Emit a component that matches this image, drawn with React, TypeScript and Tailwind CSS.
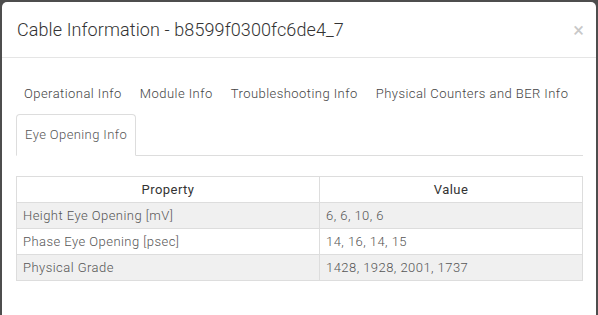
import React from "react";

const tabs1 = ["Operational Info", "Module Info", "Troubleshooting Info", "Physical Counters and BER Info"];

const rows = [
  ["Height Eye Opening [mV]", "6, 6, 10, 6"],
  ["Phase Eye Opening [psec]", "14, 16, 14, 15"],
  ["Physical Grade", "1428, 1928, 2001, 1737"],
];

export default function App() {
  return (
    <div className="w-[598px] h-[315px] bg-[#4d4d4d] pt-[2px] px-[2px] overflow-hidden" style={{ fontFamily: "Roboto, sans-serif" }}>
      <div className="bg-white rounded-t-[5px] h-[320px] text-[#333]">
        <div className="h-[56px] border-b border-[#e5e5e5] flex items-center justify-between pl-[15px] pr-[12px]">
          <span className="text-[18px] font-light text-[#333] tracking-[0.1px]">Cable Information - b8599f0300fc6de4_7</span>
          <span className="text-[20px] text-[#c8c8c8] leading-none">×</span>
        </div>
        <div className="pl-[14px] pr-[13px] pt-[15px]">
          <div className="flex flex-wrap border-b border-[#ddd]">
            {tabs1.map((t) => (
              <div key={t} className="px-[8px] h-[41px] flex items-center mr-[2px] text-[13px] font-light text-[#444] tracking-[0.45px]">
                {t}
              </div>
            ))}
            <div className="px-[8px] h-[42px] -mb-px flex items-center text-[13px] font-light text-[#555] tracking-[0.4px] border border-[#ddd] border-b-white rounded-t-[4px] bg-white">
              Eye Opening Info
            </div>
          </div>
          <table className="mt-[20px] w-full border-collapse text-[13px] font-light text-[#555] tracking-[0.45px]">
            <thead>
              <tr className="h-[26px]">
                <th className="border border-[#ddd] font-normal text-[#333] w-[303px]">Property</th>
                <th className="border border-[#ddd] font-normal text-[#333]">Value</th>
              </tr>
            </thead>
            <tbody>
              {rows.map((r, i) => (
                <tr key={r[0]} className={i % 2 === 0 ? "h-[26px] bg-[#f0f0f0]" : "h-[26px] bg-white"}>
                  <td className="border border-[#ddd] px-[6px]">{r[0]}</td>
                  <td className="border border-[#ddd] px-[6px]">{r[1]}</td>
                </tr>
              ))}
            </tbody>
          </table>
        </div>
      </div>
    </div>
  );
}
